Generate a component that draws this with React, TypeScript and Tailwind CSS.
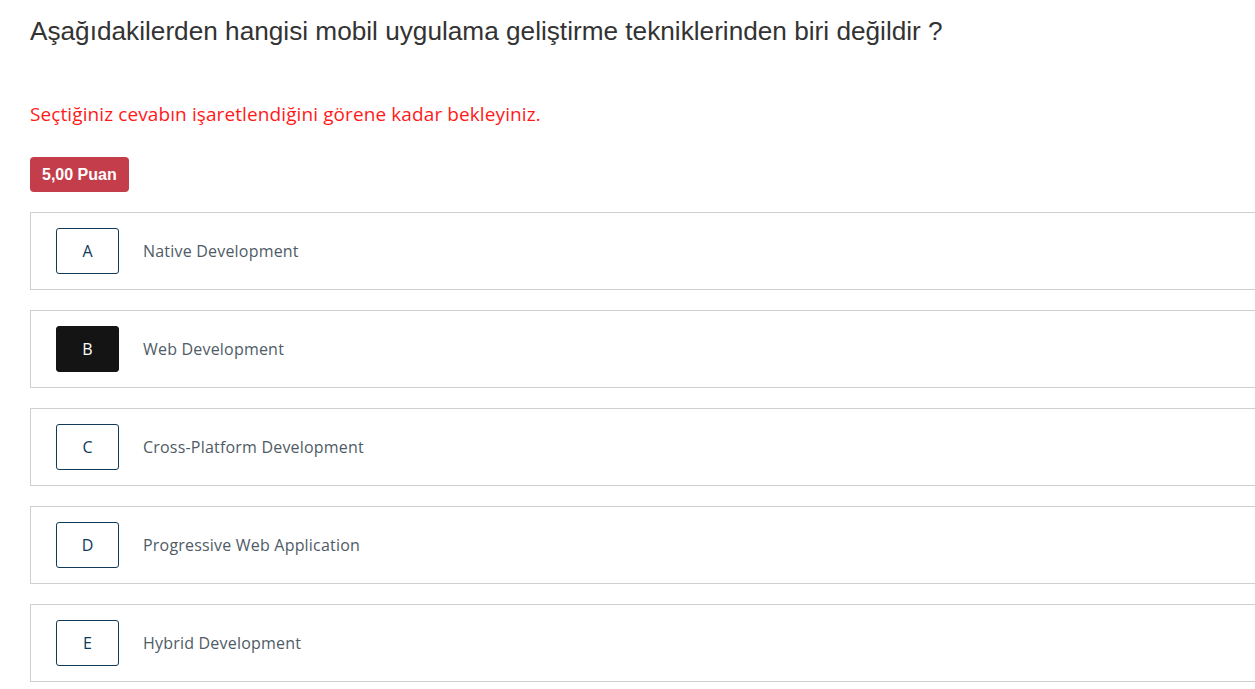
const options = [
  { key: 'A', label: 'Native Development' },
  { key: 'B', label: 'Web Development', selected: true },
  { key: 'C', label: 'Cross-Platform Development' },
  { key: 'D', label: 'Progressive Web Application' },
  { key: 'E', label: 'Hybrid Development' },
]

export default function App() {
  return (
    <div className="min-h-screen bg-white pl-[30px] font-['Liberation_Sans',Arial,sans-serif]">
      {/* soru başlığı */}
      <h1 className="pt-[14px] text-[26.2px] leading-[34px] text-[#333333]">
        Aşağıdakilerden hangisi mobil uygulama geliştirme tekniklerinden biri değildir ?
      </h1>

      <p className="mt-[53px] font-['Open_Sans',sans-serif] text-[19px] leading-[26px] tracking-[0.1px] text-[#ff1a1a]">
        Seçtiğiniz cevabın işaretlendiğini görene kadar bekleyiniz.
      </p>

      <div className="mt-[30px] inline-flex h-[35px] items-center rounded-[4px] bg-[#c43d4b] px-[12px] text-[16px] font-bold text-white">
        5,00 Puan
      </div>

      {/* şıklar */}
      <div className="mt-[20px] flex flex-col gap-[20px]">
        {options.map((o) => (
          <div
            key={o.key}
            className="-mr-[10px] flex h-[78px] items-center border border-[#cfcfcf] pl-[25px]"
          >
            <div
              className={`flex h-[46px] w-[63px] items-center justify-center rounded-[3px] border font-['Open_Sans',sans-serif] text-[16px] ${
                o.selected
                  ? 'border-[#141414] bg-[#141414] text-white'
                  : 'border-[#0f3a5a] bg-white text-[#0f3a5a]'
              }`}
            >
              {o.key}
            </div>
            <span className="ml-[24px] font-['Open_Sans',sans-serif] text-[16px] tracking-[0.2px] text-[#4f5b66]">
              {o.label}
            </span>
          </div>
        ))}
      </div>
    </div>
  )
}
